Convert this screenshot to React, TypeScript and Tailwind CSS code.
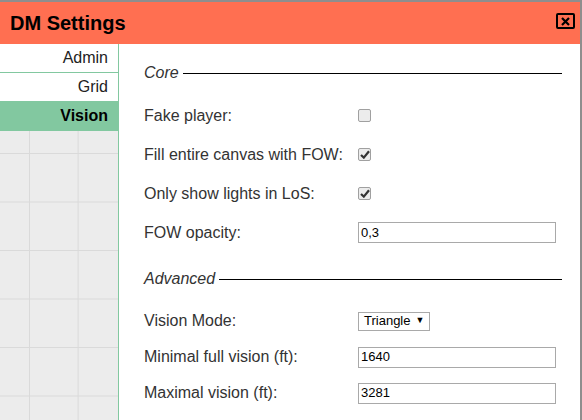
const NAV = ['Admin', 'Grid', 'Vision']

function Check({ on }: { on: boolean }) {
  return (
    <span className="flex h-[13px] w-[13px] items-center justify-center rounded-[2px] border border-[#a0a0a0] bg-[#ececec]">
      {on && (
        <svg width="10" height="9" viewBox="0 0 10 9">
          <path d="M1 5 L3.8 7.6 L9 1.2" fill="none" stroke="#333" strokeWidth="2.2" />
        </svg>
      )}
    </span>
  )
}

function Field({ value }: { value: string }) {
  return (
    <div className="flex h-[21px] w-[198px] items-center border border-[#a9a9a9] bg-white pl-[2px] text-[13px] text-black">
      {value}
    </div>
  )
}

function Section({ title }: { title: string }) {
  return (
    <div className="flex h-[20px] items-center gap-[4px] pr-[18px] italic">
      <span>{title}</span>
      <div className="h-px flex-1 bg-black" />
    </div>
  )
}

function Row({ label, h, children }: { label: string; h: string; children: React.ReactNode }) {
  return (
    <div className={`grid grid-cols-[214px_1fr] items-center ${h}`}>
      <span>{label}</span>
      <div>{children}</div>
    </div>
  )
}

export default function App() {
  return (
    <div
      className="h-[420px] w-[582px] overflow-hidden bg-[#8e8e8e] pt-[2px]"
      style={{ fontFamily: '"Liberation Sans", Arial, sans-serif' }}
    >
      <div className="flex h-[418px] w-[580px] flex-col">
        <div className="flex h-[42px] shrink-0 items-center justify-between bg-[#ff6f51] pl-[10px] pr-[5px]">
          <h1 className="text-[20px] font-bold text-black">DM Settings</h1>
          <div className="mb-[4px] flex h-[16px] w-[19px] items-center justify-center rounded-[2px] border-2 border-black">
            <svg width="9" height="9" viewBox="0 0 9 9">
              <path d="M1 1 L8 8 M8 1 L1 8" stroke="#000" strokeWidth="2.2" />
            </svg>
          </div>
        </div>
        <div className="flex flex-1">
          <div className="flex w-[119px] flex-col border-r border-[#82c8a0] bg-[#ececec] bg-[image:linear-gradient(to_right,#dadada_1px,transparent_1px),linear-gradient(to_bottom,#dadada_1px,transparent_1px)] bg-[size:48.6px_48.5px] bg-[position:29px_12px] text-[16px] text-[#222]">
            {NAV.map(n => (
              <div
                key={n}
                className={`h-[29px] border-b border-[#82c8a0] pr-[10px] text-right leading-[28px] ${
                  n === 'Vision' ? 'bg-[#82c8a0] font-bold text-black' : 'bg-white'
                }`}
              >
                {n}
              </div>
            ))}
          </div>
          <div className="flex-1 bg-white pl-[25px] pt-[19px] text-[16px] text-[#333]">
            <Section title="Core" />
            <div className="mt-[13px]">
              <Row label="Fake player:" h="h-[39px]"><Check on={false} /></Row>
              <Row label="Fill entire canvas with FOW:" h="h-[39px]"><Check on /></Row>
              <Row label="Only show lights in LoS:" h="h-[39px]"><Check on /></Row>
              <Row label="FOW opacity:" h="h-[39px]"><Field value="0,3" /></Row>
            </div>
            <div className="mt-[17px]">
              <Section title="Advanced" />
            </div>
            <div className="mt-[14px]">
              <Row label="Vision Mode:" h="h-[36px]">
                <div className="flex h-[19px] w-[72px] items-center gap-[5px] border border-[#a9a9a9] bg-white pl-[5px] text-[13px] text-black">
                  Triangle <span className="text-[9px]">▼</span>
                </div>
              </Row>
              <Row label="Minimal full vision (ft):" h="h-[36px]"><Field value="1640" /></Row>
              <Row label="Maximal vision (ft):" h="h-[36px]"><Field value="3281" /></Row>
            </div>
          </div>
        </div>
      </div>
    </div>
  )
}
